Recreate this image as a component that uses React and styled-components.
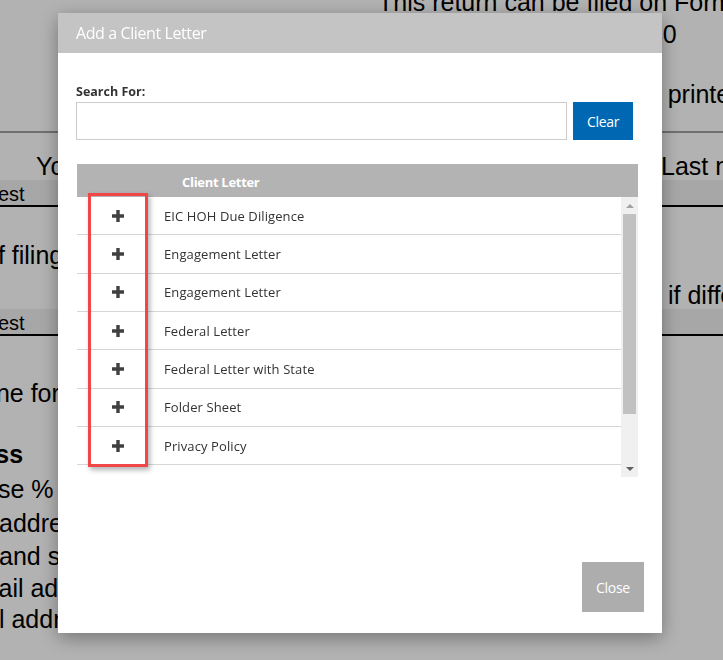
import React from "react";
import styled, { createGlobalStyle } from "styled-components";

const GlobalStyle = createGlobalStyle`
  html, body {
    margin: 0;
    padding: 0;
  }
  body {
    width: 723px;
    height: 660px;
    overflow: hidden;
    background: #fff;
    font-family: "Liberation Sans", Arial, sans-serif;
  }
`;

/* ---- page behind the dialog ---- */

const Page = styled.div`
  margin-top: -12px;
  color: #000;
`;

const BgRow = styled.div`
  display: grid;
  height: ${p => p.$h}px;
  background: ${p => (p.$band ? "#f0f0f0" : "transparent")};
  border-bottom: ${p => (p.$rule ? `2px solid ${p.$rule}` : "none")};
  overflow: hidden;
  white-space: nowrap;
`;

const Frag = styled.span`
  grid-area: 1 / 1;
  align-self: end;
  margin-left: ${p => p.$x}px;
  font-size: ${p => p.$size || 25}px;
  line-height: ${p => p.$lh || 28}px;
  font-weight: ${p => (p.$bold ? 700 : 400)};
`;

const Overlay = styled.div`
  position: fixed;
  inset: 0;
  background: rgba(0, 0, 0, 0.3);
`;

/* ---- dialog ---- */

const Modal = styled.div`
  position: fixed;
  top: 13px;
  left: 58px;
  width: 604px;
  height: 620px;
  background: #fff;
  box-shadow: 0 5px 18px rgba(0, 0, 0, 0.35);
  display: flex;
  flex-direction: column;
  font-family: "Open Sans", "Noto Sans", sans-serif;
`;

const ModalHeader = styled.div`
  height: 40px;
  flex: none;
  background: #c4c4c4;
  color: #fff;
  font-size: 16px;
  letter-spacing: -0.4px;
  padding-left: 18px;
  display: flex;
  align-items: center;
`;

const ModalBody = styled.div`
  flex: 1;
  display: flex;
  flex-direction: column;
  padding: 30px 18px 21px;
`;

const Label = styled.label`
  font-size: 12.5px;
  font-weight: 700;
  color: #333;
  line-height: 18px;
  margin-bottom: 1px;
`;

const SearchRow = styled.div`
  display: flex;
  gap: 6px;
  width: 557px;
`;

const SearchInput = styled.input`
  flex: 1;
  height: 38px;
  box-sizing: border-box;
  border: 1px solid #ccc;
  padding: 0 8px;
  font: 13px "Open Sans", sans-serif;
  outline: none;
`;

const Button = styled.button`
  border: 0;
  padding: 0;
  color: #fff;
  font: 14px "Open Sans", sans-serif;
  letter-spacing: -0.3px;
  background: ${p => p.$bg};
  width: ${p => p.$w}px;
  height: ${p => p.$h}px;
`;

const Table = styled.div`
  position: relative;
  margin: 24px 0 0 1px;
  width: 561px;
`;

const TableHead = styled.div`
  height: 33px;
  background: #b3b3b3;
  display: grid;
  grid-template-columns: 82px 1fr;
  align-items: center;
  color: #fff;
  font-size: 13px;
  font-weight: 700;
  letter-spacing: -0.3px;
`;

const HeadCell = styled.div`
  padding-left: 23px;
  padding-top: 3px;
`;

const TableBody = styled.div`
  display: flex;
  height: 280px;
`;

const RowList = styled.div`
  flex: 1;
  overflow: hidden;
`;

const Row = styled.div`
  display: grid;
  grid-template-columns: 82px 1fr;
  align-items: center;
  height: 38.33px;
  box-sizing: border-box;
  border-bottom: 1px solid #d6d6d6;
`;

const IconCell = styled.div`
  display: flex;
  justify-content: center;
  color: #404040;
`;

const NameCell = styled.div`
  padding-left: 5px;
  font-size: 13px;
  color: #333;
  letter-spacing: 0.1px;
`;

const ScrollBar = styled.div`
  width: 17px;
  background: #f0f0f0;
  display: flex;
  flex-direction: column;
`;

const Arrow = styled.div`
  height: 17px;
  display: flex;
  align-items: center;
  justify-content: center;
  &::before {
    content: "";
    border-left: 4px solid transparent;
    border-right: 4px solid transparent;
    ${p =>
      p.$down
        ? "border-top: 4px solid #606060;"
        : "border-bottom: 4px solid #a3a3a3;"}
  }
`;

const Track = styled.div`
  flex: 1;
  padding: 0 2px;
`;

const Thumb = styled.div`
  height: 200px;
  background: #c1c1c1;
`;

const Highlight = styled.div`
  position: absolute;
  left: 11px;
  top: 29px;
  width: 60px;
  height: 274px;
  box-sizing: border-box;
  border: 3px solid #f04646;
  box-shadow: 2px 3px 5px rgba(0, 0, 0, 0.3);
  pointer-events: none;
`;

const Footer = styled.div`
  margin-top: auto;
  display: flex;
  justify-content: flex-end;
`;

const PlusIcon = () => (
  <svg width="12" height="12" viewBox="0 0 12 12" aria-hidden="true">
    <path d="M4.3 0h3.4v4.3H12v3.4H7.7V12H4.3V7.7H0V4.3h4.3z" fill="currentColor" />
  </svg>
);

const letters = [
  "EIC HOH Due Diligence",
  "Engagement Letter",
  "Engagement Letter",
  "Federal Letter",
  "Federal Letter with State",
  "Folder Sheet",
  "Privacy Policy",
  "State Letter",
  "Welcome Letter",
];

export default function App() {
  return (
    <>
      <GlobalStyle />
      <Page>
        <BgRow $h={28}>
          <Frag $x={378}>This return can be filed on Form 1040</Frag>
        </BgRow>
        <BgRow $h={32}>
          <Frag $x={621}>1040</Frag>
        </BgRow>
        <BgRow $h={60}>
          <Frag $x={619}>and printed</Frag>
        </BgRow>
        <BgRow $h={23} $rule="#a0a0a0" />
        <BgRow $h={47}>
          <Frag $x={36}>Your</Frag>
          <Frag $x={661}>Last name</Frag>
        </BgRow>
        <BgRow $h={25} $band $rule="#000">
          <Frag $x={-12} $size={20} $lh={21}>Test</Frag>
        </BgRow>
        <BgRow $h={62}>
          <Frag $x={-16}>of filing</Frag>
        </BgRow>
        <BgRow $h={40}>
          <Frag $x={668}>if different</Frag>
        </BgRow>
        <BgRow $h={25} $band $rule="#000">
          <Frag $x={-12} $size={20} $lh={21}>Test</Frag>
        </BgRow>
        <BgRow $h={71}>
          <Frag $x={-18}>one for</Frag>
        </BgRow>
        <BgRow $h={61}>
          <Frag $x={-77} $bold>Address</Frag>
        </BgRow>
        <BgRow $h={35}>
          <Frag $x={-16}>use %</Frag>
        </BgRow>
        <BgRow $h={34}>
          <Frag $x={-1}>address</Frag>
        </BgRow>
        <BgRow $h={33}>
          <Frag $x={-1}>and state</Frag>
        </BgRow>
        <BgRow $h={32}>
          <Frag $x={-39}>Email address</Frag>
        </BgRow>
        <BgRow $h={31}>
          <Frag $x={-58}>Email address</Frag>
        </BgRow>
      </Page>

      <Overlay />

      <Modal role="dialog" aria-label="Add a Client Letter">
        <ModalHeader>Add a Client Letter</ModalHeader>
        <ModalBody>
          <Label htmlFor="search">Search For:</Label>
          <SearchRow>
            <SearchInput id="search" type="text" />
            <Button $bg="#0068b3" $w={60} $h={38}>Clear</Button>
          </SearchRow>

          <Table>
            <TableHead>
              <div />
              <HeadCell>Client Letter</HeadCell>
            </TableHead>
            <TableBody>
              <RowList>
                {letters.map((name, i) => (
                  <Row key={i}>
                    <IconCell>
                      <PlusIcon />
                    </IconCell>
                    <NameCell>{name}</NameCell>
                  </Row>
                ))}
              </RowList>
              <ScrollBar>
                <Arrow />
                <Track>
                  <Thumb />
                </Track>
                <Arrow $down />
              </ScrollBar>
            </TableBody>
            <Highlight />
          </Table>

          <Footer>
            <Button $bg="#adadad" $w={62} $h={50}>Close</Button>
          </Footer>
        </ModalBody>
      </Modal>
    </>
  );
}
